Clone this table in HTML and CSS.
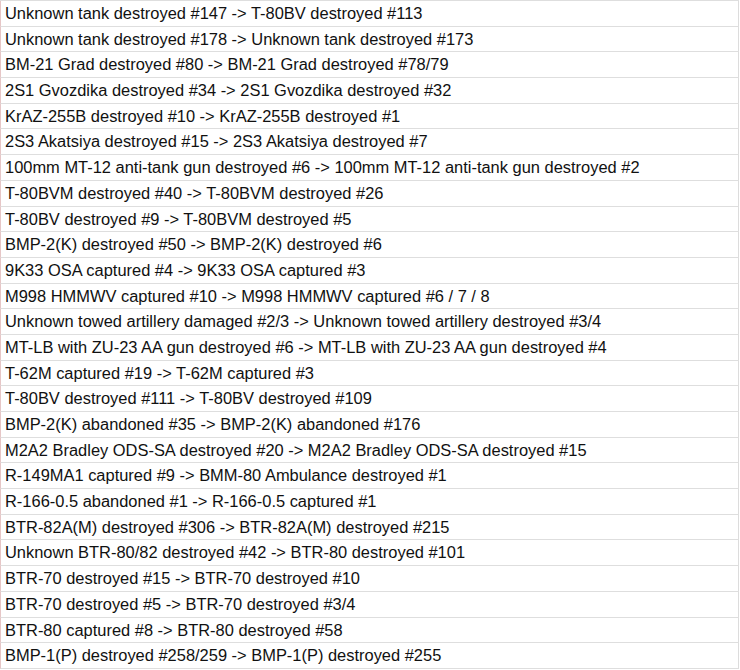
FILE: index.html
```html
<!DOCTYPE html>
<html>
<head>
<meta charset="utf-8">
<link rel="stylesheet" href="styles.css">
</head>
<body>
<div class="list">
  <div class="row">Unknown tank destroyed #147 -&gt; T-80BV destroyed #113</div>
  <div class="row">Unknown tank destroyed #178 -&gt; Unknown tank destroyed #173</div>
  <div class="row">BM-21 Grad destroyed #80 -&gt; BM-21 Grad destroyed #78/79</div>
  <div class="row">2S1 Gvozdika destroyed #34 -&gt; 2S1 Gvozdika destroyed #32</div>
  <div class="row">KrAZ-255B destroyed #10 -&gt; KrAZ-255B destroyed #1</div>
  <div class="row">2S3 Akatsiya destroyed #15 -&gt; 2S3 Akatsiya destroyed #7</div>
  <div class="row">100mm MT-12 anti-tank gun destroyed #6 -&gt; 100mm MT-12 anti-tank gun destroyed #2</div>
  <div class="row">T-80BVM destroyed #40 -&gt; T-80BVM destroyed #26</div>
  <div class="row">T-80BV destroyed #9 -&gt; T-80BVM destroyed #5</div>
  <div class="row">BMP-2(K) destroyed #50 -&gt; BMP-2(K) destroyed #6</div>
  <div class="row">9K33 OSA captured #4 -&gt; 9K33 OSA captured #3</div>
  <div class="row">M998 HMMWV captured #10 -&gt; M998 HMMWV captured #6 / 7 / 8</div>
  <div class="row">Unknown towed artillery damaged #2/3 -&gt; Unknown towed artillery destroyed #3/4</div>
  <div class="row">MT-LB with ZU-23 AA gun destroyed #6 -&gt; MT-LB with ZU-23 AA gun destroyed #4</div>
  <div class="row">T-62M captured #19 -&gt; T-62M captured #3</div>
  <div class="row">T-80BV destroyed #111 -&gt; T-80BV destroyed #109</div>
  <div class="row">BMP-2(K) abandoned #35 -&gt; BMP-2(K) abandoned #176</div>
  <div class="row">M2A2 Bradley ODS-SA destroyed #20 -&gt; M2A2 Bradley ODS-SA destroyed #15</div>
  <div class="row">R-149MA1 captured #9 -&gt; BMM-80 Ambulance destroyed #1</div>
  <div class="row">R-166-0.5 abandoned #1 -&gt; R-166-0.5 captured #1</div>
  <div class="row">BTR-82A(M) destroyed #306 -&gt; BTR-82A(M) destroyed #215</div>
  <div class="row">Unknown BTR-80/82 destroyed #42 -&gt; BTR-80 destroyed #101</div>
  <div class="row">BTR-70 destroyed #15 -&gt; BTR-70 destroyed #10</div>
  <div class="row">BTR-70 destroyed #5 -&gt; BTR-70 destroyed #3/4</div>
  <div class="row">BTR-80 captured #8 -&gt; BTR-80 destroyed #58</div>
  <div class="row">BMP-1(P) destroyed #258/259 -&gt; BMP-1(P) destroyed #255</div>
</div>
</body>
</html>
```
FILE: styles.css
```css
html, body {
  margin: 0;
  padding: 0;
  background: #ffffff;
}
.list {
  width: 739px;
  border-top: 1px solid #dedede;
  font-family: "Liberation Sans", Arial, sans-serif;
  font-size: 16.45px;
  color: #111111;
}
.row {
  height: 24.69px;
  line-height: 25.2px;
  padding: 0 4px;
  border-bottom: 1px solid #dedede;
  border-left: 1px solid #e6c6c6;
  border-right: 1px solid #dcdcdc;
  box-sizing: content-box;
  white-space: nowrap;
}
```
